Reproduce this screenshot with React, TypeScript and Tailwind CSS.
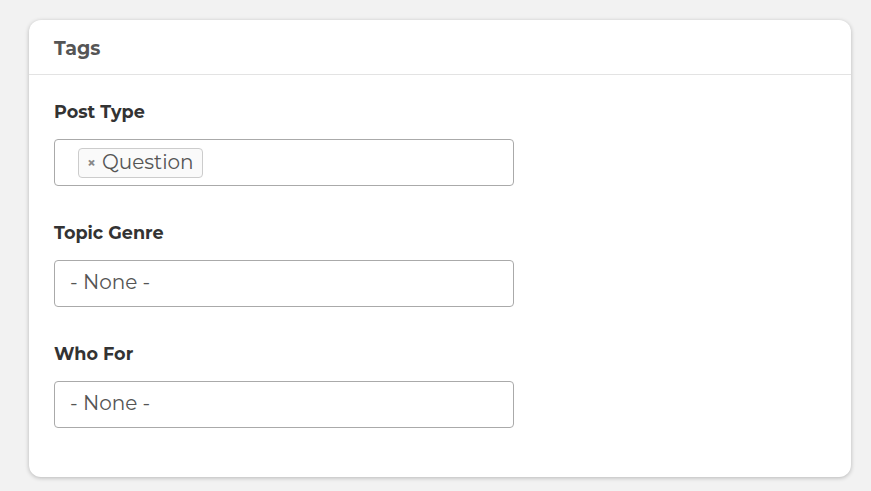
export default function App() {
  const fields = [
    { label: 'Post Type', tags: ['Question'] },
    { label: 'Topic Genre', tags: [] as string[] },
    { label: 'Who For', tags: [] as string[] },
  ]

  return (
    <div className="min-h-screen bg-[#f2f2f2] pt-[20px] pl-[29px] pr-[20px] pb-[14px] font-['Montserrat','Open_Sans',sans-serif]">
      <div className="w-[822px] h-[457px] bg-white rounded-[12px] shadow-[0_1px_4px_rgba(0,0,0,0.25)]">
        {/* Header */}
        <div className="h-[55px] border-b border-[#e3e3e3] px-[25px] pt-[4px] flex items-center">
          <h2 className="text-[19px] font-bold text-[#555]">Tags</h2>
        </div>

        {/* Fields */}
        <div className="px-[25px] pt-[25px] flex flex-col gap-[35px]">
          {fields.map((f) => (
            <div key={f.label}>
              <label className="block text-[17.6px] font-bold text-[#333] leading-[24px] mb-[15px]">
                {f.label}
              </label>
              <div className="w-[460px] h-[47px] border border-[#aaa] rounded-[4px] flex items-center">
                {f.tags.length > 0 ? (
                  <div className="pl-[23px] flex items-center">
                    {f.tags.map((t) => (
                      <span
                        key={t}
                        className="h-[30px] pl-[8px] pr-[8px] border border-[#ccc] rounded-[4px] bg-[#fafafa] flex items-center gap-[6px] text-[20px] text-[#555]"
                      >
                        <span className="text-[15px] font-bold text-[#888] leading-none">×</span>
                        <span className="pb-[2px]">{t}</span>
                      </span>
                    ))}
                  </div>
                ) : (
                  <span className="pl-[15px] pb-[3px] text-[20px] text-[#555]">- None -</span>
                )}
              </div>
            </div>
          ))}
        </div>
      </div>
    </div>
  )
}
